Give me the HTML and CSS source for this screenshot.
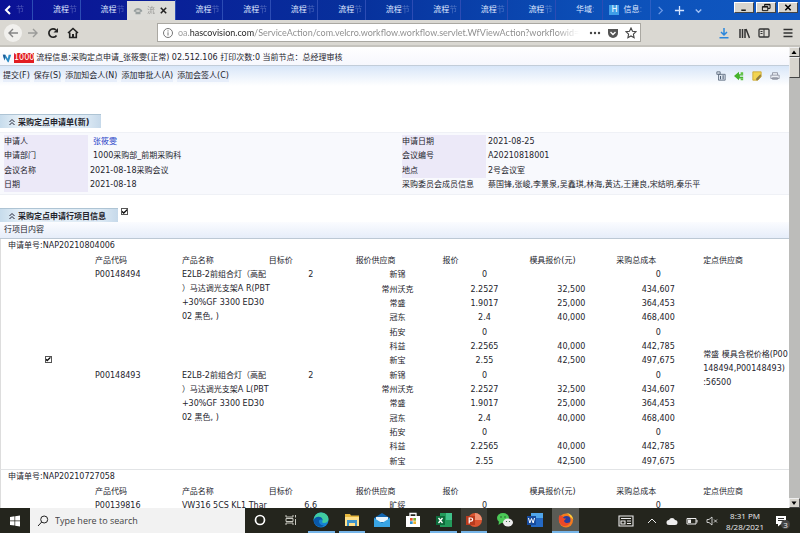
FILE: index.html
```
<!DOCTYPE html>
<html lang="zh-CN">
<head>
<meta charset="utf-8">
<title>流程信息:采购定点申请</title>
<link rel="stylesheet" href="styles.css">
</head>
<body>
<header class="browser">
  <nav class="tabs" aria-label="Tabs">
    <button class="tab-scroll" aria-label="Scroll left"><svg viewBox="0 0 12 12"><path d="M8 2 4 6l4 4" fill="none" stroke="#fff" stroke-width="2"/></svg></button>
    <button class="tab tab-cut"><span class="faded">节</span></button>
    <button class="tab">流程<span class="faded">节</span></button>
    <button class="tab">流程<span class="faded">节</span></button>
    <button class="tab active"><svg class="fav" viewBox="0 0 12 12"><path d="M1 5q5-5 10 0v2H8V5H4v2H1zM3 7h6v3H3z" fill="#98a0a0"/></svg><span class="soft">流</span><svg class="close" viewBox="0 0 10 10"><path d="m2 2 6 6M8 2 2 8" stroke="#222" stroke-width="1.7"/></svg></button>
    <button class="tab">流程<span class="faded">节</span></button>
    <button class="tab">流程<span class="faded">节</span></button>
    <button class="tab">流程<span class="faded">节</span></button>
    <button class="tab">流程<span class="faded">节</span></button>
    <button class="tab">流程<span class="faded">节</span></button>
    <button class="tab">流程<span class="faded">节</span></button>
    <button class="tab">流程<span class="faded">节</span></button>
    <button class="tab">流程<span class="faded">节</span></button>
    <button class="tab">华域<span class="faded">:</span></button>
    <button class="tab with-fav"><span class="h-icon">H</span>信息<span class="faded">:</span></button>
    <span class="tab-tools">
      <button aria-label="Scroll right"><svg viewBox="0 0 12 12"><path d="m4 2 4 4-4 4" fill="none" stroke="#6f9be8" stroke-width="1.3"/></svg></button>
      <button aria-label="New tab"><svg viewBox="0 0 12 12"><path d="M6 1v10M1 6h10" stroke="#d5e4ff" stroke-width="1.4"/></svg></button>
      <button aria-label="List tabs"><svg viewBox="0 0 12 12"><path d="m3 5 3 3 3-3" fill="none" stroke="#9fc0f5" stroke-width="1.5"/></svg></button>
    </span>
    <span class="window-buttons">
      <button aria-label="Minimize"><svg viewBox="0 0 12 10"><path d="M3 8h5" stroke="#000" stroke-width="1.5"/></svg></button>
      <button aria-label="Restore"><svg viewBox="0 0 12 10"><path d="M4.5 3.500V1.500h6v4.500H8M2 4h6v4.500H2zM2 4.500h6M4.500 2h6" fill="none" stroke="#000"/></svg></button>
      <button aria-label="Close"><svg viewBox="0 0 12 10"><path d="m3 2 6 6M9 2 3 8" stroke="#000" stroke-width="1.7"/></svg></button>
    </span>
  </nav>
  <div class="toolbar">
    <div class="nav-buttons">
      <button class="back" aria-label="Back"><svg viewBox="0 0 12 12"><path d="M11 6H2M6 2 2 6l4 4" fill="none" stroke="#858585" stroke-width="1.4"/></svg></button>
      <button aria-label="Forward"><svg viewBox="0 0 12 12"><path d="M1 6h9M6 2l4 4-4 4" fill="none" stroke="#9b9b99" stroke-width="1.4"/></svg></button>
      <button aria-label="Reload"><svg viewBox="0 0 12 12"><path d="M9.500 8.500A4.200 4.200 0 1 1 9 3" fill="none" stroke="#222" stroke-width="1.7"/><path d="M11 1v4.500H6.500z" fill="#222"/></svg></button>
      <button aria-label="Home"><svg viewBox="0 0 12 12"><path d="m1 6 5-4.500L11 6M2.700 5.500v5h6.600v-5" fill="none" stroke="#222" stroke-width="1.6"/><path d="M5 7h2v4H5z" fill="#222"/></svg></button>
    </div>
    <div class="address">
      <svg class="info-icon" viewBox="0 0 12 12"><circle cx="6" cy="6" r="4.500" fill="none" stroke="#777"/><path d="M6 5.300v3.200M6 3.300v1.200" stroke="#777"/></svg>
      <input type="text" class="url" aria-label="Address" value="oa.hascovision.com/ServiceAction/com.velcro.workflow.workflow.servlet.WfViewAction?workflowid=4a">
      <button aria-label="Page actions"><svg viewBox="0 0 12 12"><g fill="#444"><circle cx="2" cy="6" r="1.200"/><circle cx="6" cy="6" r="1.200"/><circle cx="10" cy="6" r="1.200"/></g></svg></button>
      <button aria-label="Pocket"><svg viewBox="0 0 12 12"><path d="M1 2h10v4a5 5 0 0 1-10 0z" fill="#555"/><path d="m3.500 5 2.500 2.500L8.500 5" fill="none" stroke="#fff" stroke-width="1.400"/></svg></button>
      <button aria-label="Bookmark"><svg viewBox="0 0 12 12"><path d="m6 1 1.500 3.300 3.500.4-2.600 2.400.7 3.600L6 9l-3.100 1.700.7-3.600L1 4.700l3.500-.4z" fill="none" stroke="#444" stroke-width="1.100"/></svg></button>
    </div>
    <div class="right-tools">
      <button aria-label="Downloads"><svg viewBox="0 0 12 12"><path d="M6 1v7M3 5l3 3 3-3M1.500 10.800h9" fill="none" stroke="#2a86dc" stroke-width="1.500"/></svg></button>
      <button aria-label="Library"><svg viewBox="0 0 12 12"><path d="M2 2v9M4.500 2v9M7 2v9M8 2l3.500 9" stroke="#333" stroke-width="1.500"/></svg></button>
      <button aria-label="Sidebar"><svg viewBox="0 0 12 12"><rect x="1" y="2" width="10" height="8" rx="1" fill="none" stroke="#333" stroke-width="1.300"/><path d="M6 2v8M2.500 4.500h2M2.500 6.500h2" stroke="#333"/></svg></button>
      <button class="menu" aria-label="Menu"><svg viewBox="0 0 12 12"><path d="M1.500 2.500h9M1.500 6h9M1.500 9.500h9" stroke="#333" stroke-width="1.500"/></svg></button>
    </div>
  </div>
</header>

<div class="viewport">
  <main class="page">
    <h1 class="title-bar">
      <svg viewBox="0 0 12 12"><path d="M1 2h3l3 5 1-5h3L8 11H7L4 6 3 9z" fill="#2a8ac4"/><path d="M1 2h3L3 9z" fill="#235a94"/></svg>
      <span class="code">1000</span>
      <span>流程信息:采购定点申请_张筱雯(正常) 02.512.106 打印次数:0 当前节点：总经理审核</span>
    </h1>
    <div class="actions">
      <button>提交(F)</button>
      <button>保存(S)</button>
      <button>添加知会人(N)</button>
      <button>添加审批人(A)</button>
      <button>添加会签人(C)</button>
      <span class="action-icons">
        <svg viewBox="0 0 12 12"><path d="M1 1h4v3H1zM3 4h8v7H3z" fill="#dce4ee" stroke="#59677b"/><path d="M5 6h1v4H5zM8 5h1v5H8z" fill="#33445c"/></svg>
        <svg viewBox="0 0 12 12"><path d="m0 6 6-5v3h5v1.500H7v1.500h4V9H6v2z" fill="#45b32c"/><path d="M8 1.500h3v2.500H8zM8 9h3v2H8z" fill="#5cc23f"/></svg>
        <svg viewBox="0 0 12 12"><path d="M1 1h10v6l-4 4H1z" fill="#f2d452" stroke="#c9a532"/><path d="m5 9 5-5 1 2-4 5H5z" fill="#8c7a42"/></svg>
        <svg viewBox="0 0 12 12"><path d="M3 5V2h6v3M1 5h10v4H1zM3 8h6v2H3z" fill="#eceff5" stroke="#8c8f9d"/></svg>
      </span>
    </div>

    <h2 class="section-tab first"><svg viewBox="0 0 8 8"><path d="m1.500 4 2.500-2.500L6.500 4M1.500 7 4 4.500 6.500 7" fill="none" stroke="#223"/></svg>采购定点申请单(新)</h2>
    <dl class="info">
      <dt>申请人</dt><dd class="inset"><a href="#user">张筱雯</a></dd>
      <dt>申请日期</dt><dd>2021-08-25</dd>
      <dt>申请部门</dt><dd class="inset">1000采购部_前期采购科</dd>
      <dt>会议编号</dt><dd>A20210818001</dd>
      <dt>会议名称</dt><dd>2021-08-18采购会议</dd>
      <dt>地点</dt><dd>2号会议室</dd>
      <dt>日期</dt><dd>2021-08-18</dd>
      <dt class="plain">采购委员会成员信息</dt><dd>蔡国锋,张峻,李景泉,吴鑫琪,林海,黄达,王建良,宋结明,秦乐平</dd>
    </dl>

    <div class="section-row">
      <h2 class="section-tab"><svg viewBox="0 0 8 8"><path d="m1.500 4 2.500-2.500L6.500 4M1.500 7 4 4.500 6.500 7" fill="none" stroke="#223"/></svg>采购定点申请行项目信息</h2>
      <input type="checkbox" class="check" aria-label="采购定点申请行项目信息" checked>
    </div>
    <div class="content-head">行项目内容</div>

    <section class="order">
      <h3>申请单号:NAP20210804006</h3>
      <table class="items">
        <colgroup><col class="pick"><col><col><col><col><col><col><col><col></colgroup>
        <thead><tr><th></th><th>产品代码</th><th>产品名称</th><th>目标价</th><th>报价供应商</th><th>报价</th><th>模具报价(元)</th><th>采购总成本</th><th>定点供应商</th></tr></thead>
        <tbody>
          <tr><td rowspan="14" class="middle pick-cell"><input type="checkbox" class="check" aria-label="NAP20210804006" checked></td><td rowspan="7" class="text">P00148494</td><td rowspan="7" class="text">E2LB-2前组合灯（高配<br>）马达调光支架A R(PBT<br>+30%GF 3300 ED30<br>02 黑色, )</td><td rowspan="7">2</td><td>新锦</td><td>0</td><td></td><td>0</td><td rowspan="14" class="text middle">常盛 模具含税价格(P00<br>148494,P00148493)<br>:56500</td></tr>
          <tr><td>常州沃克</td><td>2.2527</td><td>32,500</td><td>434,607</td></tr>
          <tr><td>常盛</td><td>1.9017</td><td>25,000</td><td>364,453</td></tr>
          <tr><td>冠东</td><td>2.4</td><td>40,000</td><td>468,400</td></tr>
          <tr><td>拓安</td><td>0</td><td></td><td>0</td></tr>
          <tr><td>科益</td><td>2.2565</td><td>40,000</td><td>442,785</td></tr>
          <tr><td>新宝</td><td>2.55</td><td>42,500</td><td>497,675</td></tr>
          <tr><td rowspan="7" class="text">P00148493</td><td rowspan="7" class="text">E2LB-2前组合灯（高配<br>）马达调光支架A L(PBT<br>+30%GF 3300 ED30<br>02 黑色, )</td><td rowspan="7">2</td><td>新锦</td><td>0</td><td></td><td>0</td></tr>
          <tr><td>常州沃克</td><td>2.2527</td><td>32,500</td><td>434,607</td></tr>
          <tr><td>常盛</td><td>1.9017</td><td>25,000</td><td>364,453</td></tr>
          <tr><td>冠东</td><td>2.4</td><td>40,000</td><td>468,400</td></tr>
          <tr><td>拓安</td><td>0</td><td></td><td>0</td></tr>
          <tr><td>科益</td><td>2.2565</td><td>40,000</td><td>442,785</td></tr>
          <tr><td>新宝</td><td>2.55</td><td>42,500</td><td>497,675</td></tr>
        </tbody>
      </table>
    </section>
    <section class="order">
      <h3>申请单号:NAP20210727058</h3>
      <table class="items">
        <colgroup><col class="pick"><col><col><col><col><col><col><col><col></colgroup>
        <thead><tr><th></th><th>产品代码</th><th>产品名称</th><th>目标价</th><th>报价供应商</th><th>报价</th><th>模具报价(元)</th><th>采购总成本</th><th>定点供应商</th></tr></thead>
        <tbody><tr><td></td><td class="text">P00139816</td><td class="text">VW316 5CS KL1 Thar</td><td>6.6</td><td>旷绥</td><td>0</td><td></td><td>0</td><td></td></tr></tbody>
      </table>
    </section>
  </main>
  <div class="scrollbar">
    <button aria-label="Scroll up"><svg viewBox="0 0 8 8"><path d="M1.500 6 4 2.500 6.500 6z" fill="#000"/></svg></button>
    <div class="thumb"></div>
    <button class="down" aria-label="Scroll down"><svg viewBox="0 0 8 8"><path d="M1.500 2.500h5L4 6z" fill="#000"/></svg></button>
  </div>
</div>

<footer class="taskbar">
  <button class="start" aria-label="Start"><svg viewBox="0 0 12 12"><path d="m1 2 4.500-.7v4.200H1zM6.200 1.200 11 .5v5H6.200zM1 6.200h4.500v4.300L1 9.900zM6.200 6.200H11v5.300l-4.800-.8z" fill="#fff"/></svg></button>
  <label class="search"><svg viewBox="0 0 12 12"><circle cx="7.200" cy="4.500" r="3.500" fill="none" stroke="#222"/><path d="M4.700 7 1 11" stroke="#222"/></svg><input type="text" placeholder="Type here to search" aria-label="Search"></label>
  <div class="apps">
    <button aria-label="Cortana"><svg viewBox="0 0 16 16"><circle cx="8" cy="8" r="4.500" fill="none" stroke="#fff" stroke-width="1.700"/></svg></button>
    <button aria-label="Task view"><svg viewBox="0 0 16 16"><path d="M3 3v2h7V3M3 13v-2h7v2M3 6.500h7v3H3zM12.500 3v2.500M12.500 7v6" fill="none" stroke="#c8c8c0"/></svg></button>
    <button class="open" aria-label="Edge"><svg viewBox="0 0 16 16"><circle cx="8" cy="8" r="7.500" fill="#1684d4"/><path d="M.7 8C1 3.500 4 .5 8 .5c4.500 0 7.500 3 7.500 6.500 0 2.500-2 4-4.500 4-2 0-2-1-1.500-2C10 6 7.500 4.500 5 5 3 5.300 1.500 6.500.7 8z" fill="#40cba0"/><path d="M.7 8c.8-2 2.800-3.500 5.300-3.200C8.500 5 9.800 7 9.500 8.500 9 7.500 7.500 7 6.500 8 5 10 7 13.500 11 13.500c-2.500 2.500-10 1.500-10.300-5.500z" fill="#0a58a8"/></svg></button>
    <button class="open" aria-label="File Explorer"><svg viewBox="0 0 16 16"><path d="M1 2h5l1 1.500h8V14H1z" fill="#e7b83e"/><path d="M1 5h14v9H1z" fill="#ffe08a"/><path d="M3 8h10v6h-2v-3H5v3H3z" fill="#3e94cb"/></svg></button>
    <button aria-label="Mail"><svg viewBox="0 0 16 16"><path d="m0 6 8-5 8 5v9H0z" fill="#1266b0"/><path d="m2 5 12 0v5H2z" fill="#e9f4fc"/><path d="m0 6 8 5 8-5v9H0z" fill="#38a4e4"/></svg></button>
    <button aria-label="Store"><svg viewBox="0 0 16 16"><path d="M5 5V1.500h6V5" fill="none" stroke="#fff" stroke-width="1.300"/><path d="M1 4h14v11H1z" fill="#fff"/><path d="M5 6h2.700v2.700H5z" fill="#e2522b"/><path d="M8.300 6H11v2.700H8.300z" fill="#79ae2f"/><path d="M5 9.300h2.700V12H5z" fill="#2c91d2"/><path d="M8.300 9.300H11V12H8.300z" fill="#edb12f"/></svg></button>
    <button class="open" aria-label="Excel"><svg viewBox="0 0 16 16"><path d="M4 1h12v14H4z" fill="#239b5b"/><path d="M10 1h6v7h-6z" fill="#40c18a"/><path d="M0 4h9v9H0z" fill="#0d6b3a"/><path d="m2.500 6 4 5M6.500 6l-4 5" stroke="#fff" stroke-width="1.300"/></svg></button>
    <button class="open current" aria-label="PowerPoint"><svg viewBox="0 0 16 16"><circle cx="9" cy="8" r="7" fill="#db5430"/><path d="M9 1a7 7 0 0 1 7 7H9z" fill="#f09072"/><path d="M0 4h9v9H0z" fill="#b93a1d"/><path d="M3.200 11.500V6H5a1.600 1.600 0 0 1 0 3.200H3.500" fill="none" stroke="#fff" stroke-width="1.200"/></svg></button>
    <button aria-label="WeChat"><svg viewBox="0 0 16 16"><ellipse cx="6" cy="6" rx="6" ry="5" fill="#4bc957"/><path d="M2 9 1.500 13 5 10.500z" fill="#4bc957"/><ellipse cx="11" cy="10.500" rx="5" ry="4" fill="#ececec"/><g fill="#245c2d"><circle cx="4" cy="5" r=".8"/><circle cx="8" cy="5" r=".8"/><circle cx="9.500" cy="9.500" r=".6"/><circle cx="12.500" cy="9.500" r=".6"/></g></svg></button>
    <button aria-label="Word"><svg viewBox="0 0 16 16"><path d="M4 1h12v14H4z" fill="#2469c4"/><path d="M4 1h12v5H4z" fill="#50a5ea"/><path d="M0 4h9v9H0z" fill="#164b9e"/><path d="m1.500 6 1.300 5L4.500 6.500 6.200 11 7.500 6" fill="none" stroke="#fff"/></svg></button>
    <button class="open active-app" aria-label="Firefox"><svg viewBox="0 0 16 16"><circle cx="8" cy="8.500" r="7" fill="#f37b1e"/><path d="M8 1c4 0 7 3 7.300 7-1-2-2-2-3-3-.5-1.500-2-3-4.300-4z" fill="#ffcd3a"/><circle cx="8.500" cy="8" r="4" fill="#293d9c"/><path d="M1.500 3c1 1 2 1 3.500 1-1 2 1 2.500 3 2.500C7 8.500 6 8 6 9c1 2.500 4 2.500 6 1-1 4-6 5.500-9 2.500C.5 10 0 6 1.500 3z" fill="#ec4929"/></svg></button>
  </div>
  <div class="tray">
    <svg class="news" viewBox="0 0 16 12"><path d="M1 1h14v10H1zM3 3.500h10M3 6h4v3H3zM9 6h4M9 8.500h4" fill="none" stroke="#eee" stroke-width="1.100"/></svg>
    <svg viewBox="0 0 12 12"><path d="m2 8 4-4 4 4" fill="none" stroke="#eee"/></svg>
    <svg viewBox="0 0 12 12"><path d="M3 10a2.500 2.500 0 0 1 0-5 3.200 3.200 0 0 1 6 0 2.500 2.500 0 0 1 0 5z" fill="#eee"/></svg>
    <svg viewBox="0 0 12 12"><path d="M1 3.500h9v5.500H1zM11 5v2.500" fill="none" stroke="#eee"/><path d="M2 4.500h3V8H2z" fill="#eee"/></svg>
    <svg viewBox="0 0 12 12"><path d="M1 4.500h2L6 2v8L3 7.500H1zM8 4.500l3 3M11 4.500l-3 3" fill="none" stroke="#ddd" stroke-width=".9"/></svg>
    <div class="clock"><time>8:31 PM</time><time>8/28/2021</time></div>
    <button class="notice" aria-label="Notifications"><svg viewBox="0 0 12 12"><path d="M1 1h10v8H6l-3 2.500V9H1z" fill="#fff"/><path d="M3 3.500h6M3 5.500h6" stroke="#333"/></svg><span>3</span></button>
  </div>
</footer>
</body>
</html>
```
FILE: styles.css
```
* { box-sizing: border-box; }

body {
  margin: 0;
  height: 100vh;
  display: flex;
  flex-direction: column;
  overflow: hidden;
  background: #fff;
  color: #24242c;
  font: 8px/14px "DejaVu Sans", "Noto Sans CJK SC", sans-serif;
}

button {
  margin: 0;
  padding: 0;
  border: 0;
  background: none;
  color: inherit;
  font: inherit;
}

svg { display: block; width: 12px; height: 12px; flex: none; }
h1, h2, h3, dl, dd { margin: 0; font-size: 8px; }

/* Browser chrome */
.tabs {
  display: grid;
  grid-template-columns: 14px 18px repeat(13, minmax(0, 1fr)) 84px 66px;
  height: 20px;
  background: linear-gradient(90deg, #0b1195, #07319c 45%, #0c50b8 75%, #1058c2);
  color: #dfe6ff;
}
.tab-scroll { padding-left: 2px; }
.tab {
  padding-left: 20px;
  border-left: 1px solid #2c4cb4;
  text-align: left;
  white-space: nowrap;
}
.tab-cut { padding-left: 2px; border: 0; }
.faded { opacity: .3; }
.tab.active {
  display: flex;
  align-items: center;
  gap: 4px;
  margin-top: 1px;
  padding-left: 6px;
  background: #dcdcd8;
  border: 0;
  color: #555;
}
.soft { opacity: .5; }
.close { width: 9px; height: 9px; }
.fav { width: 10px; height: 10px; }
.tab.with-fav { display: flex; align-items: center; padding-left: 6px; }
.h-icon {
  flex: none;
  width: 10px;
  margin-right: 4px;
  background: #3f9ee8;
  color: #fff;
  line-height: 10px;
  text-align: center;
}
.tab-tools { display: flex; align-items: center; gap: 8px; padding-left: 4px; border-left: 1px solid #2c5fc4; }
.tab-tools svg { width: 11px; height: 11px; }
.window-buttons { display: flex; align-items: flex-start; gap: 2px; padding-top: 2px; }
.window-buttons button {
  display: flex;
  justify-content: center;
  align-items: center;
  width: 20px;
  height: 11px;
  background: #d8d5ce;
  border: 1px solid #fff;
  border-right-color: #444;
  border-bottom-color: #444;
}
.window-buttons svg { height: 9px; }

.toolbar {
  display: flex;
  align-items: center;
  height: 27px;
  padding: 0 6px 0 4px;
  background: #dad8d2;
  border-bottom: 2px solid #c5c3bd;
}
.nav-buttons { display: flex; align-items: center; gap: 8px; width: 153px; }
.nav-buttons .back { margin-right: -3px; padding: 3px; border-radius: 50%; background: #f1f0ed; }
.address {
  display: flex;
  align-items: center;
  gap: 6px;
  flex: 0 1 484px;
  height: 19px;
  padding: 0 3px 0 4px;
  background: #fff;
  border: 1px solid #aaa8a2;
}
.info-icon { margin-right: -2px; }
.url {
  flex: 1;
  min-width: 0;
  padding: 0;
  border: 0;
  outline: 0;
  color: transparent;
  background: linear-gradient(90deg, #999 11px, #222 11px 76px, #8a8a8a 76px 378px, #fff 402px);
  -webkit-background-clip: text;
  background-clip: text;
  font: 9px/17px Lato, sans-serif;
}
.right-tools { display: flex; gap: 8px; margin-left: auto; }
.right-tools .menu { margin-left: 4px; }

/* Workflow page */
.viewport { flex: 1; min-height: 0; display: flex; }
.page { flex: 1; min-width: 0; overflow: hidden; }
.title-bar {
  display: flex;
  align-items: center;
  gap: 2px;
  height: 19px;
  padding: 4px 2px 0;
  border-bottom: 1px solid #c2cdd9;
  background: linear-gradient(#fff, #f6f7fd);
  font-weight: normal;
  white-space: nowrap;
}
.title-bar svg { width: 10px; height: 10px; }
.code { background: #e21d21; color: #fff; line-height: 10px; }
.actions {
  display: flex;
  align-items: center;
  gap: 4px;
  height: 20px;
  padding: 0 9px 0 3px;
  background: linear-gradient(#d8e6f8, #fff);
}
.actions button { background: #e7eefa; line-height: 12px; }
.action-icons { display: flex; gap: 8px; margin-left: auto; }
.action-icons svg { width: 10px; height: 10px; }

.section-tab {
  display: flex;
  align-items: center;
  gap: 2px;
  width: max-content;
  height: 14px;
  padding: 1px 12px 0 8px;
  background: linear-gradient(90deg, #c7dcec, #e8f1f8 20%, #dce9f4 85%, #c6d9ea);
  border-top: 1px solid #aec4d4;
  line-height: 13px;
}
.section-tab svg { width: 8px; height: 8px; }
.section-tab.first { margin-top: 28px; }
.info {
  display: grid;
  grid-template-columns: 84px 314fr 84px 303fr;
  grid-auto-rows: 1fr;
  height: 63px;
  margin: 4px 0 13px;
  padding: 2px 0 2px 4px;
  border-top: 1px solid #eff1f6;
  border-bottom: 1px solid #eff1f6;
  background: #f8f9fd;
  white-space: nowrap;
}
.info dt { background: #ece9f8; }
.info .plain { background: none; }
.info dd { padding-left: 2px; }
.info .inset { padding-left: 5px; }
.info a { color: #2842c8; text-decoration: none; }
.section-row { display: flex; gap: 3px; }
.content-head {
  height: 17px;
  padding: 1px 4px;
  border-bottom: 1px solid #bcc8d4;
  background: linear-gradient(#fbfcff, #e6edf9);
}
.check {
  appearance: none;
  display: inline-block;
  width: 7px;
  height: 7px;
  margin: 0;
  border: 1px solid #555;
  background: #fff;
  vertical-align: middle;
}
.check:checked::after {
  content: "";
  display: block;
  height: 5px;
  background: #111;
  clip-path: polygon(0 35%, 35% 60%, 100% 0, 100% 35%, 35% 100%, 0 70%);
}

.order { padding-right: 2px; border-left: 1px solid #ddd; border-bottom: 1px solid #e2e4e6; }
.order h3 { height: 15px; padding: 0 7px; font-weight: normal; }
.items { width: 100%; table-layout: fixed; border-collapse: collapse; }
.items .pick { width: 91px; }
.items th, .items td {
  height: 14px;
  padding: 0 0 0 3px;
  text-align: center;
  vertical-align: top;
  font-weight: normal;
  white-space: nowrap;
}
.items th { text-align: left; }
.items tbody tr:nth-child(3n + 1) td { height: 15px; }
.items tbody .text { text-align: left; }
.items tbody tr .middle { vertical-align: middle; }
.items tbody tr .pick-cell { padding-bottom: 18px; }

.scrollbar {
  display: flex;
  flex-direction: column;
  width: 11px;
  background: #bcbcba;
}
.scrollbar button, .thumb { background: #d8d5ce; border: 1px solid #eee; border-right-color: #555; border-bottom-color: #444; }
.scrollbar button { height: 10px; }
.scrollbar svg { width: 8px; height: 8px; }
.thumb { height: 21px; }
.scrollbar .down { margin-top: auto; }

/* Taskbar */
.taskbar {
  display: flex;
  height: 25px;
  background: #24251d;
  color: #eee;
  font-family: "Open Sans", sans-serif;
}
.start { display: grid; place-items: center; width: 30px; }
.search {
  display: flex;
  align-items: center;
  gap: 6px;
  flex: 0 1 215px;
  padding-left: 7px;
  background: #f2f2f2;
}
.search input { flex: 1; min-width: 0; padding: 0; border: 0; background: none; font: 9px/16px "Open Sans", sans-serif; }
.search input::placeholder { color: #444; opacity: 1; }
.apps { display: grid; grid-template-columns: repeat(11, 1fr); width: 42%; }
.apps button { display: grid; place-items: center; margin: 0 2px; border-top: 1px solid transparent; border-bottom: 2px solid transparent; }
.apps .open { border-bottom-color: #76b5e8; }
.apps .current { background: #3b3c35; }
.apps .active-app { background: #5a5b55; }
.apps svg { width: 16px; height: 16px; }
.tray { display: flex; align-items: center; gap: 8px; margin-left: auto; padding-right: 13px; }
.tray .news { width: 16px; margin-right: 4px; }
.clock { display: grid; text-align: center; line-height: 11px; }
.notice { position: relative; margin-left: 3px; }
.notice span {
  position: absolute;
  left: 6px;
  top: 5px;
  width: 9px;
  border-radius: 50%;
  background: #444;
  line-height: 9px;
}
```
